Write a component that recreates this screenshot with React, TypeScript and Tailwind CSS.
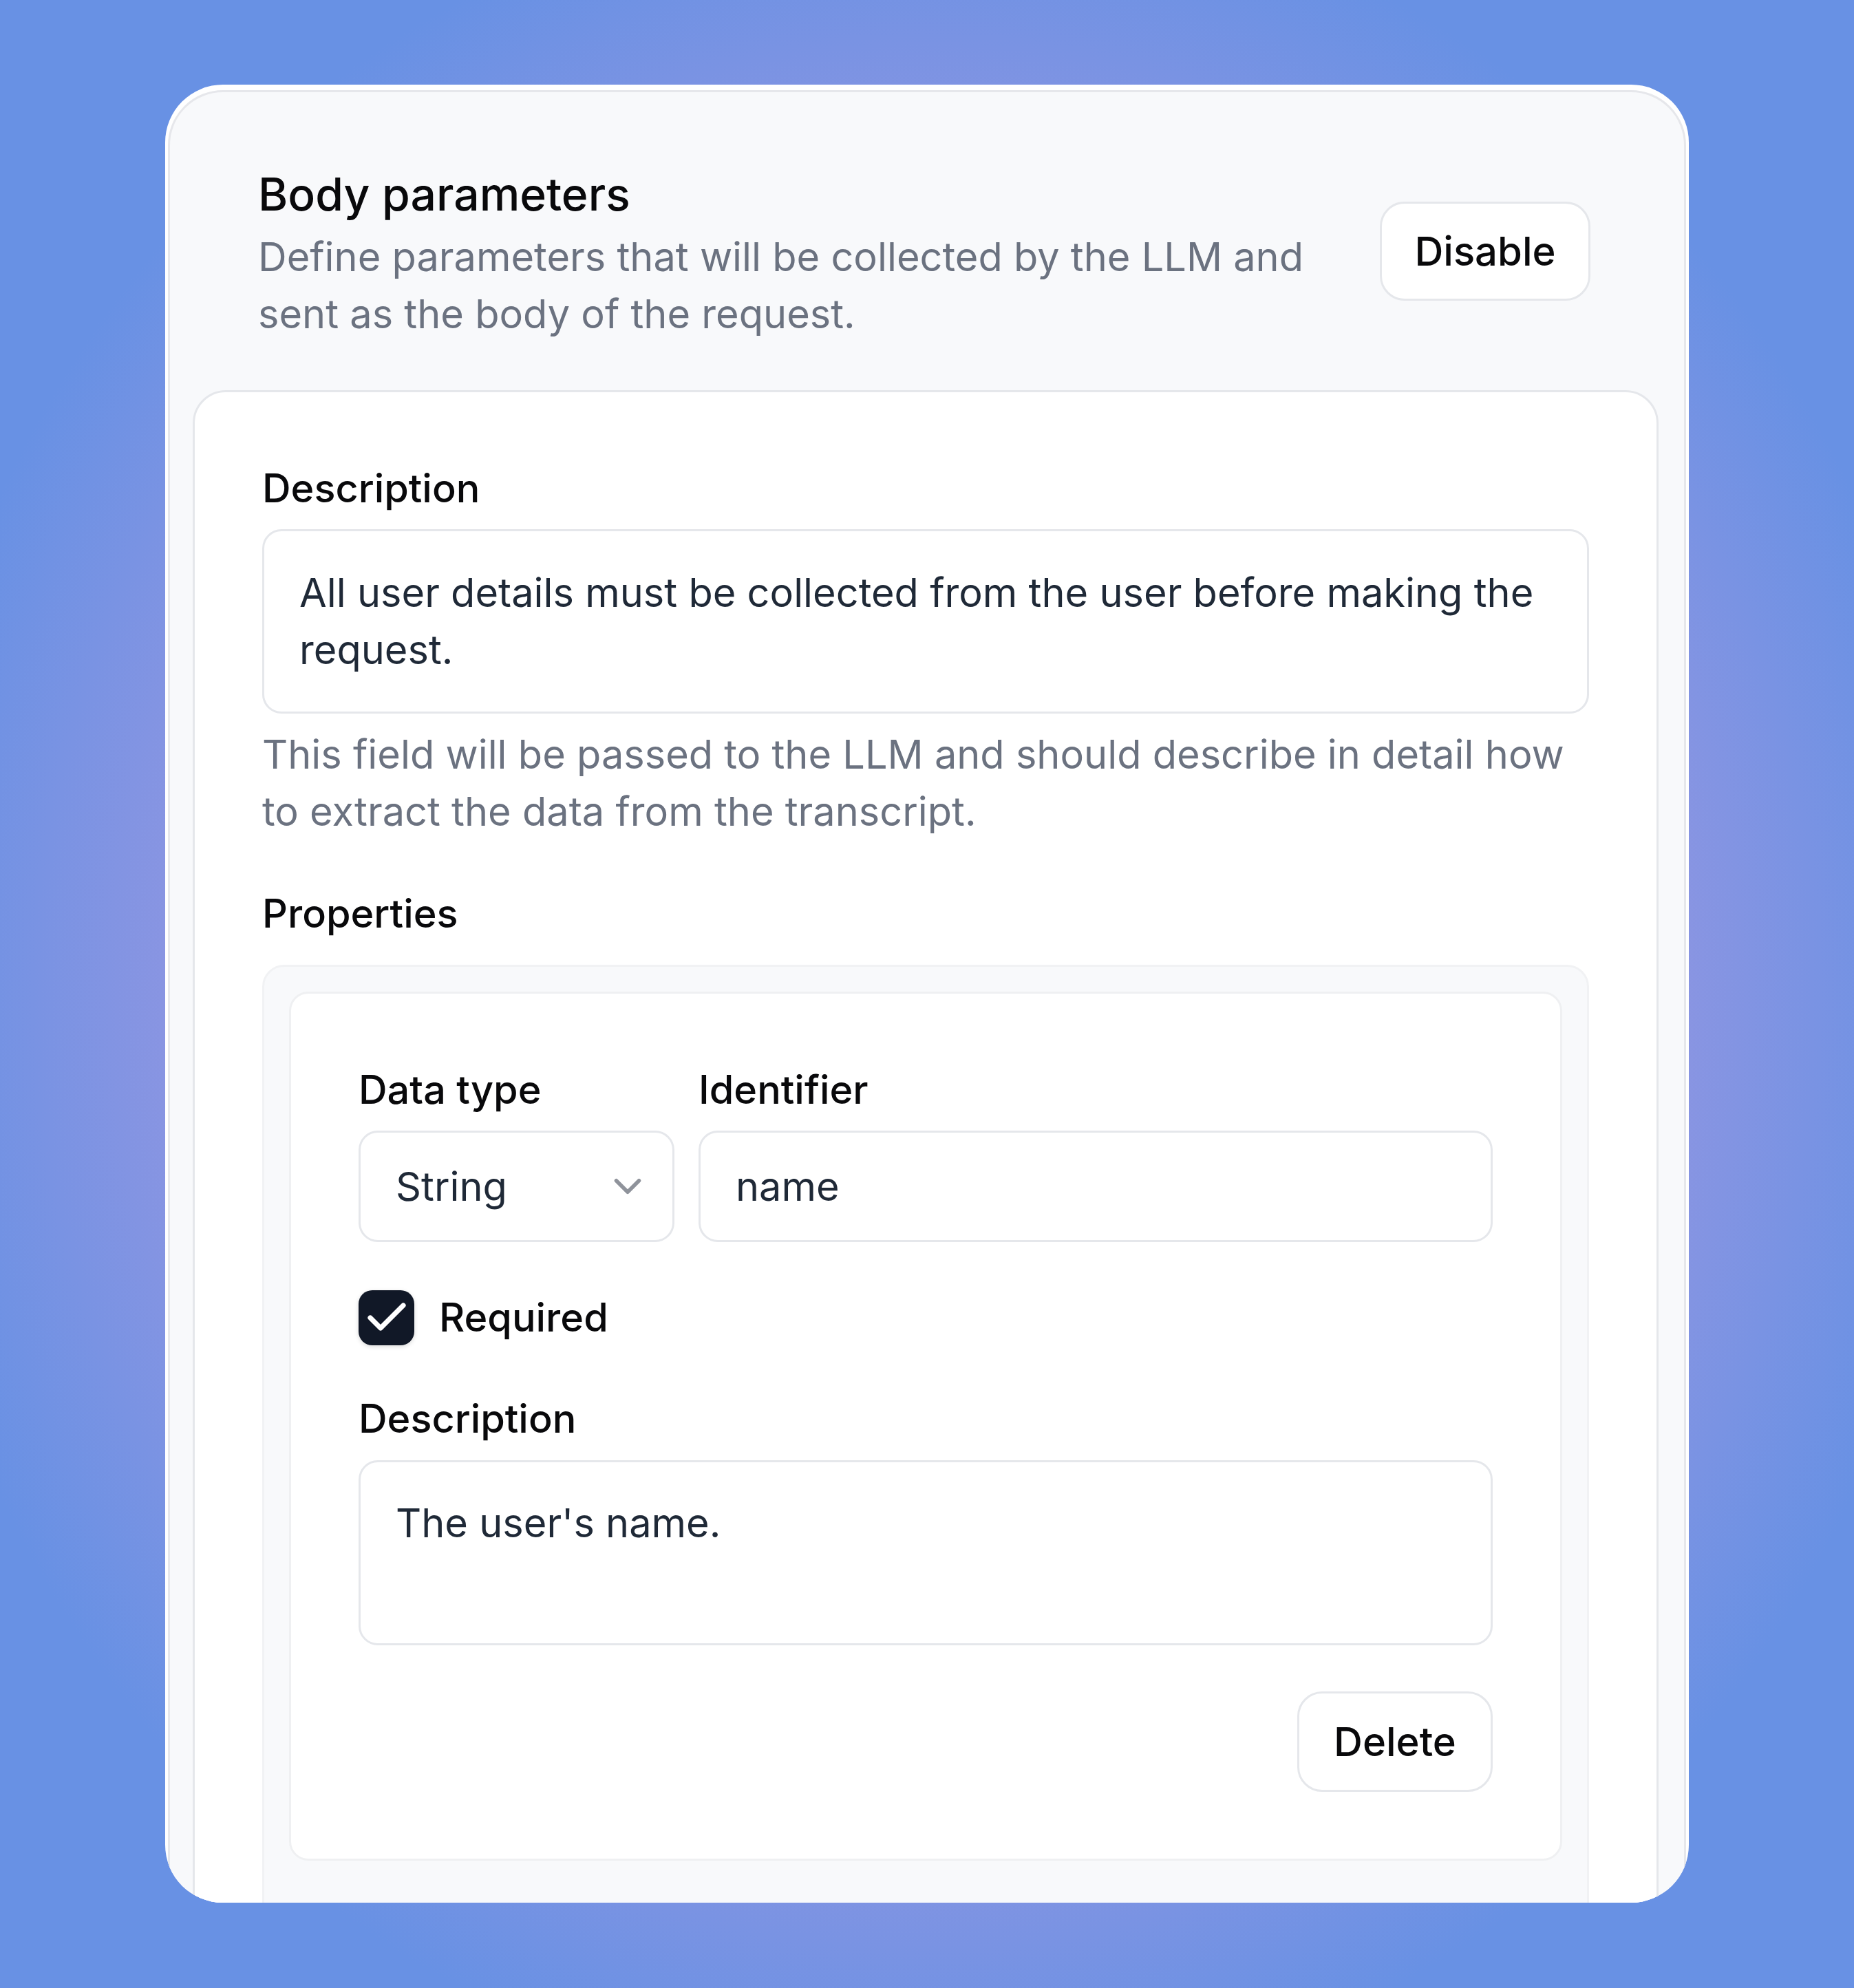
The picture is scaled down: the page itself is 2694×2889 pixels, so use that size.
import { Check, ChevronDown } from "lucide-react";
import type { ReactNode } from "react";

const Label = ({ children }: { children: ReactNode }) => (
  <div className="text-[57.6px] leading-[83px] font-medium text-[#09090b]">{children}</div>
);

const Field = ({ children, className = "" }: { children: ReactNode; className?: string }) => (
  <div
    className={
      "rounded-[28px] border-[3px] border-[#e5e7eb] bg-white text-[57.7px] leading-[83px] text-[#1f2937] " +
      className
    }
  >
    {children}
  </div>
);

export default function App() {
  return (
    <div className="w-[2694px] h-[2889px] overflow-hidden bg-[#6790e4] bg-[radial-gradient(ellipse_50%_50%_at_50%_50%,#9296e0_0%,#8b95e2_80%,#6891e4_112%)] pt-[123px] pl-[240px] font-[Inter,sans-serif]">
      {/* card */}
      <div className="w-[2214px] h-[2642px] overflow-hidden rounded-[84px] bg-white px-[4px] pt-[8px]">
        <div className="h-[2720px] rounded-[80px] border-[3px] border-[#e6e7eb] bg-[#f8f9fb]">
          {/* header */}
          <div className="flex items-center justify-between gap-[64px] pl-[128px] pr-[136px] pt-[98px]">
            <div className="flex-1">
              <div className="text-[66px] leading-[100px] font-medium text-[#09090b]">Body parameters</div>
              <div className="text-[57.7px] leading-[83px] text-[#6b7280] whitespace-nowrap">
                Define parameters that will be collected by the LLM and
                <br />
                sent as the body of the request.
              </div>
            </div>
            <button className="flex h-[144px] w-[306px] shrink-0 items-center justify-center rounded-[36px] border-[3px] border-[#e5e7eb] bg-white text-[58px] font-medium text-[#09090b]">
              Disable
            </button>
          </div>

          {/* body */}
          <div className="mt-[69px] ml-[33px] mr-[37px] rounded-[48px] border-[3px] border-[#e5e7eb] bg-white px-[98px] pt-[98px] pb-[100px]">
            <Label>Description</Label>
            <Field className="mt-[18px] px-[51px] py-[48px] whitespace-nowrap">
              All user details must be collected from the user before making the
              <br />
              request.
            </Field>
            <p className="mt-[18px] text-[57.7px] leading-[83px] text-[#6b7280] whitespace-nowrap">
              This field will be passed to the LLM and should describe in detail how
              <br />
              to extract the data from the transcript.
            </p>

            <div className="mt-[65px]">
              <Label>Properties</Label>
            </div>

            <div className="mt-[33px] rounded-[32px] border-[3px] border-[#f1f2f4] bg-[#f8f9fb] px-[36px] pt-[36px] pb-[120px]">
              <div className="flex flex-col rounded-[28px] border-[3px] border-[#eff0f2] bg-white px-[98px] pt-[98px] pb-[97px]">
                <div className="flex gap-[35px]">
                  <div className="w-[459px]">
                    <Label>Data type</Label>
                    <Field className="mt-[18px] flex h-[162px] items-center justify-between pl-[51px] pr-[32px]">
                      <span>String</span>
                      <ChevronDown size={66} strokeWidth={2} className="text-[#8f939b]" />
                    </Field>
                  </div>
                  <div className="flex-1">
                    <Label>Identifier</Label>
                    <Field className="mt-[18px] flex h-[162px] items-center pl-[51px]">name</Field>
                  </div>
                </div>

                <div className="mt-[68px] flex items-center gap-[36px]">
                  <div className="flex h-[80px] w-[81px] items-center justify-center rounded-[20px] bg-[#111827] shadow-[0_2px_6px_rgba(0,0,0,0.15)]">
                    <Check size={72} strokeWidth={2.4} className="text-white" />
                  </div>
                  <Label>Required</Label>
                </div>

                <div className="mt-[64px]">
                  <Label>Description</Label>
                  <Field className="mt-[19px] h-[269px] px-[51px] pt-[47px]">The user's name.</Field>
                </div>

                <div className="mt-[67px] flex justify-end">
                  <button className="flex h-[146px] w-[284px] items-center justify-center rounded-[36px] border-[3px] border-[#e5e7eb] bg-white text-[58px] font-medium text-[#09090b]">
                    Delete
                  </button>
                </div>
              </div>
            </div>
          </div>
        </div>
      </div>
    </div>
  );
}
